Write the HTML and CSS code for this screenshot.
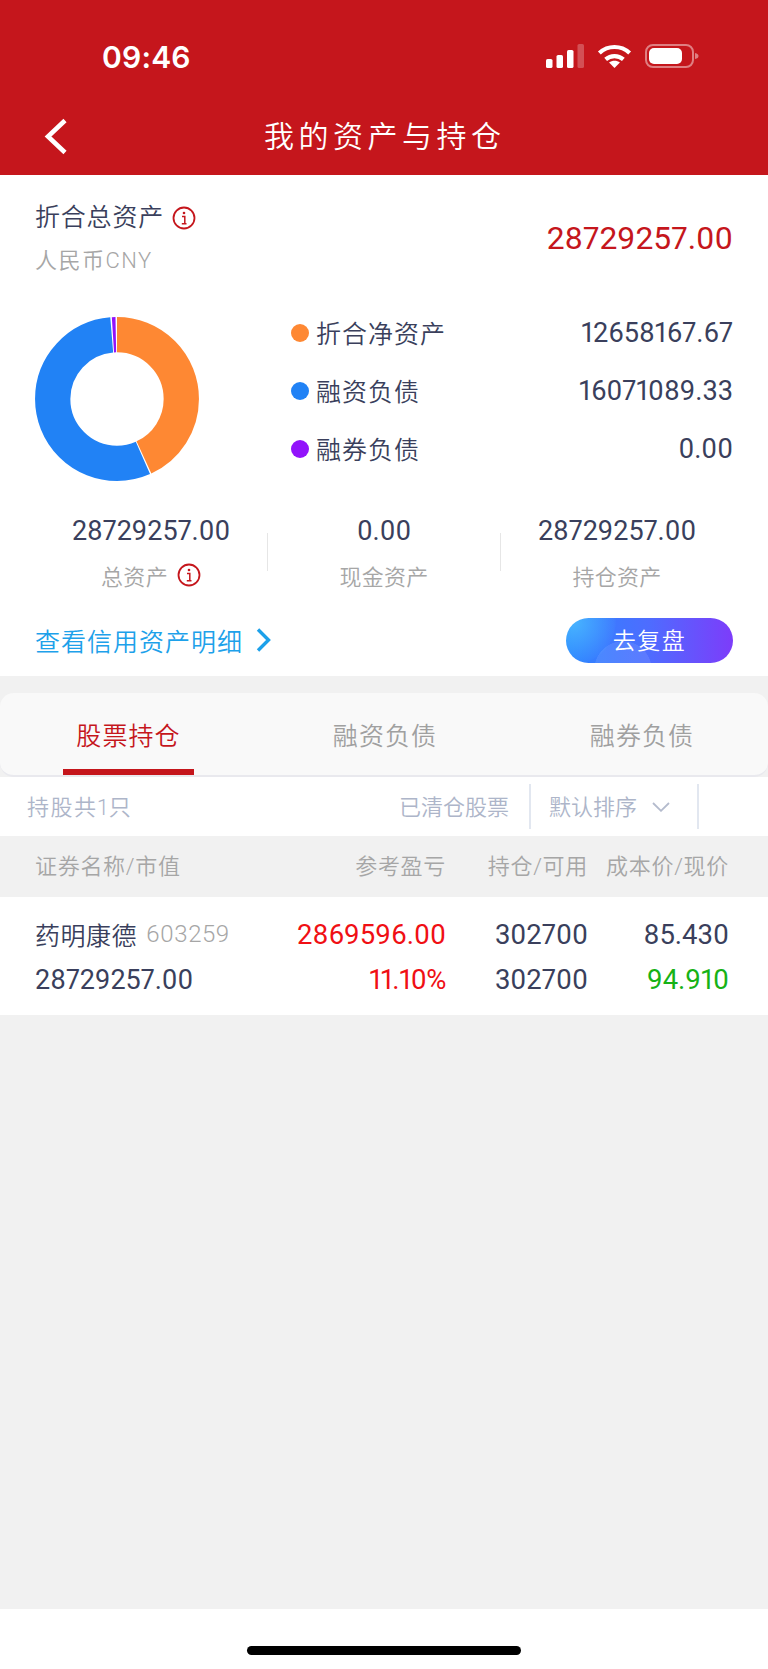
FILE: index.html
```html
<!DOCTYPE html>
<html lang="zh-CN">
<head>
<meta charset="utf-8">
<title>我的资产与持仓</title>
<link rel="stylesheet" href="styles.css">
</head>
<body>
<div class="page">
  <header class="top">
    <div class="status">
      <span class="time">09:46</span>
      <div class="status-icons">
        <svg class="signal" width="38" height="24" viewBox="0 0 38 24"><rect x="0" y="15" width="6.5" height="9" rx="1.6" fill="#fff"/><rect x="10.5" y="11" width="6.5" height="13" rx="1.6" fill="#fff"/><rect x="21" y="6" width="6.5" height="18" rx="1.6" fill="#fff"/><rect x="31.5" y="0" width="6.5" height="24" rx="1.6" fill="#fff" opacity=".25"/></svg>
        <svg class="wifi" width="35" height="24" viewBox="0 0 33 23"><path d="M2 8.6C10.300 1 22.700 1 31 8.600" fill="none" stroke="#fff" stroke-width="4"/><path d="M8 14.800C12.800 10.600 20.200 10.600 25 14.800" fill="none" stroke="#fff" stroke-width="4"/><path d="M16.500 23L11.300 17.800C14.300 15.500 18.700 15.500 21.700 17.800Z" fill="#fff"/></svg>
        <svg class="battery" width="54" height="24" viewBox="0 0 54 24"><rect x="1" y="1" width="47" height="22" rx="7" fill="none" stroke="#fff" stroke-opacity=".45" stroke-width="2"/><rect x="4" y="4" width="33" height="16" rx="5" fill="#fff"/><path d="M50 9C52.500 9.500 53.500 10.500 53.500 12S52.500 14.500 50 15Z" fill="#fff" opacity=".45"/></svg>
      </div>
    </div>
    <div class="nav">
      <svg class="back" width="24" height="37" viewBox="0 0 24 37"><path d="M21 2.500L4 18.500L21 34.500" fill="none" stroke="#fff" stroke-width="4.600"/></svg>
      <h1 class="nav-title">我的资产与持仓</h1>
    </div>
  </header>

  <section class="summary">
    <div class="total">
      <div class="total-left">
        <div class="total-name"><span>折合总资产</span>
          <svg class="info" width="24" height="24" viewBox="0 0 24 24"><circle cx="12" cy="12" r="10.500" fill="none" stroke="#c5161c" stroke-width="1.800"/><circle cx="12" cy="7" r="1.300" fill="#c5161c"/><path d="M10 10.500H12.800V17.500M9.800 17.800H14.500" fill="none" stroke="#c5161c" stroke-width="1.500"/></svg>
        </div>
        <div class="total-unit">人民币CNY</div>
      </div>
      <div class="total-value">28729257.00</div>
    </div>

    <div class="chart-row">
      <svg class="donut" width="164" height="164" viewBox="0 0 164 164">
        <g transform="rotate(-90 82 82)" fill="none" stroke-width="35.300">
          <circle cx="82" cy="82" r="64.300" pathLength="360" stroke="#fe8833" stroke-dasharray="155.200 204.800"/>
          <circle cx="82" cy="82" r="64.300" pathLength="360" stroke="#2182f5" stroke-dasharray="199 161" stroke-dashoffset="-156.200"/>
          <circle cx="82" cy="82" r="64.300" pathLength="360" stroke="#9213fb" stroke-dasharray="2.600 357.400" stroke-dashoffset="-356.300"/>
        </g>
      </svg>
      <ul class="legend">
        <li class="legend-row"><i class="dot dot-orange"></i><span class="legend-name">折合净资产</span><span class="num">12658167.67</span></li>
        <li class="legend-row"><i class="dot dot-blue"></i><span class="legend-name">融资负债</span><span class="num">16071089.33</span></li>
        <li class="legend-row"><i class="dot dot-purple"></i><span class="legend-name">融券负债</span><span class="num">0.00</span></li>
      </ul>
    </div>

    <div class="stats">
      <div class="stat"><div class="num">28729257.00</div><div class="stat-label">总资产
        <svg class="info" width="24" height="24" viewBox="0 0 24 24"><circle cx="12" cy="12" r="10.500" fill="none" stroke="#c5161c" stroke-width="1.800"/><circle cx="12" cy="7" r="1.300" fill="#c5161c"/><path d="M10 10.500H12.800V17.500M9.800 17.800H14.500" fill="none" stroke="#c5161c" stroke-width="1.500"/></svg>
      </div></div>
      <i class="stat-sep"></i>
      <div class="stat"><div class="num">0.00</div><div class="stat-label">现金资产</div></div>
      <i class="stat-sep"></i>
      <div class="stat"><div class="num">28729257.00</div><div class="stat-label">持仓资产</div></div>
    </div>

    <div class="actions">
      <div class="detail-link"><span>查看信用资产明细</span>
        <svg width="15" height="24" viewBox="0 0 15 24"><path d="M2 1.500L12.500 12L2 22.500" fill="none" stroke="#1da1ea" stroke-width="3.400"/></svg>
      </div>
      <div class="review"><span>去复盘</span></div>
    </div>
  </section>

  <section class="tabs-card">
    <div class="tab tab-on"><span>股票持仓</span></div>
    <div class="tab"><span>融资负债</span></div>
    <div class="tab"><span>融券负债</span></div>
  </section>

  <section class="filter">
    <span class="filter-count">持股共1只</span>
    <span class="filter-clear">已清仓股票</span>
    <div class="filter-sort"><span>默认排序</span>
      <svg width="18" height="10" viewBox="0 0 18 10"><path d="M1 1L9 8.800L17 1" fill="none" stroke="#b4bbcd" stroke-width="1.800"/></svg>
    </div>
  </section>

  <div class="table-head">
    <span>证券名称/市值</span><span class="right">参考盈亏</span><span class="right">持仓/可用</span><span class="right">成本价/现价</span>
  </div>

  <div class="table-row">
    <div class="stock"><span class="stock-name">药明康德</span><span class="stock-code">603259</span></div>
    <span class="num right red">2869596.00</span><span class="num right">302700</span><span class="num right">85.430</span>
    <span class="num market">28729257.00</span>
    <span class="num right red pct">11.10%</span><span class="num right">302700</span><span class="num right green">94.910</span>
  </div>

  <div class="spacer"></div>
  <footer class="home"><i class="home-bar"></i></footer>
</div>
</body>
</html>
```

FILE: styles.css
```css
* { box-sizing: border-box; margin: 0; padding: 0; }
html, body { background: #f1f1f1; }
body {
  font-family: "Roboto", "Noto Sans CJK SC", sans-serif;
  font-weight: 350;
  font-variant-numeric: proportional-nums;
  color: #3a3f5c;
  width: 768px;
  height: 1669px;
  overflow: hidden;
}
i { display: block; font-style: normal; }
ul { list-style: none; }
.page { display: flex; flex-direction: column; height: 1669px; }

.top { background: #c5161c; height: 175px; color: #fff; }
.status { height: 100px; padding: 44px 69px 0 102px; display: flex; justify-content: space-between; align-items: flex-start; }
.time { font-family: "Inter", sans-serif; font-weight: 600; font-size: 30px; line-height: 24px; padding-top: 1px; letter-spacing: .2px; }
.status-icons { display: flex; align-items: flex-end; height: 24px; }
.signal { margin-right: 13px; }
.wifi { margin-right: 13px; }
.nav { height: 75px; display: flex; align-items: flex-start; padding: 18px 0 0 44px; }
.back { flex: none; }
.nav-title { font-size: 30px; font-weight: 350; letter-spacing: 4.500px; line-height: 36px; margin-left: 196px; padding-top: 1px; }

.summary { background: #fff; height: 501px; padding: 0 35px; display: flex; flex-direction: column; }
.total { display: flex; justify-content: space-between; height: 142px; }
.total-left { padding-top: 27px; }
.total-name { display: flex; align-items: center; gap: 8px; font-size: 25px; letter-spacing: .8px; line-height: 32px; }
.total-unit { margin-top: 12px; font-size: 22px; line-height: 30px; color: #a6a6a6; letter-spacing: 1.500px; }
.total-value { font-size: 31.800px; font-weight: 400; line-height: 40px; color: #c5161c; padding-top: 43px; }
.info { display: block; flex: none; }

.chart-row { display: flex; height: 164px; }
.donut { flex: none; }
.legend { margin-left: 92px; flex: 1; }
.legend-row { display: flex; align-items: center; height: 58px; margin-top: -13px; }
.legend-row + .legend-row { margin-top: 0; }
.dot { width: 18px; height: 18px; border-radius: 50%; margin-right: 7px; flex: none; }
.dot-orange { background: #fe8833; }
.dot-blue { background: #2182f5; }
.dot-purple { background: #9213fb; }
.legend-name { flex: 1; font-size: 25px; letter-spacing: 1px; padding-bottom: 2px; }
.num { font-size: 27.500px; font-weight: 400; }
.legend .num { font-size: 27.200px; }

.stats { display: grid; grid-template-columns: 1fr 1px 1fr 1px 1fr; margin-top: 34px; height: 99px; align-items: start; }
.stat { text-align: center; }
.stat .num { line-height: 32px; font-size: 27px; }
.stat-label { display: flex; justify-content: center; align-items: center; gap: 9px; margin-top: 14px; height: 28px; font-size: 22px; color: #a6a6a6; letter-spacing: .3px; }
.stat-sep { width: 1px; height: 38px; margin-top: 18px; background: #e6e6e6; }

.actions { display: flex; justify-content: space-between; align-items: center; height: 45px; margin-top: 4px; }
.detail-link { display: flex; align-items: center; gap: 13px; padding-bottom: 1px; font-size: 25px; letter-spacing: 1px; color: #1da1ea; }
.review {
  width: 167px; height: 45px; border-radius: 23px; color: #fff; font-size: 23px; letter-spacing: 1.500px;
  display: flex; align-items: center; justify-content: center; padding-bottom: 3px;
  background:
    radial-gradient(circle 29px at 57px 52px, rgba(255,255,255,.09) 98%, transparent 100%),
    radial-gradient(circle 42px at 8px 4px, rgba(80,195,255,.75), rgba(80,195,255,.06) 98%, transparent 100%),
    linear-gradient(90deg, #2b86ff 0%, #4e6cff 50%, #7d3cfa 100%);
}

.tabs-card {
  margin-top: 17px; height: 84px; background: #f9f9f9; border-radius: 14px;
  display: grid; grid-template-columns: repeat(3, 1fr);
  border-bottom: 2px solid #e9e9ee;
}
.tab { text-align: center; font-size: 25px; letter-spacing: 1.100px; color: #a0a0a0; height: 82px; padding-top: 26px; line-height: 36px; }
.tab:nth-child(2) { padding-left: 2px; }
.tab:nth-child(3) { padding-left: 4px; }
.tab-on { color: #c5161c; }
.tab-on span { display: block; width: 131px; height: 56px; margin-left: 63px; border-bottom: 6px solid #c5161c; }

.filter { background: #fff; height: 59px; display: flex; align-items: center; padding: 0 69px 0 27px; font-size: 22px; color: #adb5c9; }
.filter > span { padding-bottom: 3px; }
.filter-count { flex: 1; letter-spacing: 1.500px; }
.filter-clear { padding-right: 20px; }
.filter-sort { height: 45px; width: 170px; border-left: 2px solid #e2e7f0; border-right: 2px solid #e2e7f0; display: flex; align-items: center; gap: 15px; padding-left: 18px; }
.filter-sort span { padding-bottom: 3px; }

.table-head, .table-row { display: grid; grid-template-columns: 1fr 150px 142px 141px; padding: 0 39px 0 35px; }
.table-head { height: 61px; align-items: center; font-size: 22px; color: #a6a6a6; padding-bottom: 6px; letter-spacing: .7px; }
.right { text-align: right; }
.table-row { background: #fff; height: 118px; grid-template-rows: 46px 45px; padding-top: 14px; align-items: center; }
.table-row .market { font-size: 27px; }
.table-row .pct { letter-spacing: -.4px; }
.stock { display: flex; align-items: center; gap: 9px; white-space: nowrap; }
.stock-name { font-size: 25px; letter-spacing: .5px; }
.stock-code { font-size: 24px; color: #a6a6a6; letter-spacing: .5px; }
.red { color: #f00f14; }
.green { color: #16b216; }

.spacer { flex: 1; }
.home { background: #fff; height: 60px; padding-top: 37px; }
.home-bar { width: 274px; height: 9px; margin-left: 247px; border-radius: 5px; background: #000; }
```
